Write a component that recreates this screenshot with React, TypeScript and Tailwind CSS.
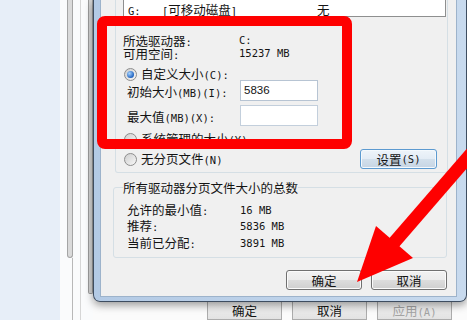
import React from 'react';

// ASCII parts of the labels: the original uses half-width SimSun glyphs
function A({ children }: { children: React.ReactNode }) {
  return <span className="font-['DejaVu_Sans_Mono',monospace] text-[10.5px]">{children}</span>;
}

function Radio({ checked }: { checked?: boolean }) {
  return (
    <span className="w-[13px] h-[13px] shrink-0 rounded-full border border-[#8d8d8d] bg-[linear-gradient(135deg,#cfcfcf,#f7f7f7)] flex items-center justify-center">
      {checked && (
        <span className="w-[7px] h-[7px] rounded-full bg-[radial-gradient(circle_at_35%_35%,#a8d4ff,#2063c0_70%)]" />
      )}
    </span>
  );
}

function WinButton({ children, focused }: { children: React.ReactNode; focused?: boolean }) {
  return (
    <div
      className={
        focused
          ? 'w-[77px] h-[20px] rounded-[3px] border border-[#5c9ad0] bg-[linear-gradient(#eef4fa,#e3ecf5_50%,#d3e0ec_50%,#c6d5e4)] shadow-[inset_0_0_0_1px_#f4f9fd] flex items-center justify-center'
          : 'w-[76px] h-[20px] rounded-[3px] border border-[#707070] bg-[linear-gradient(#f2f2f2,#ebebeb_50%,#dddddd_50%,#cfcfcf)] shadow-[inset_0_0_0_1px_#fbfbfb] flex items-center justify-center'
      }
    >
      {children}
    </div>
  );
}

function BackFrame() {
  return (
    <div className="w-[33px] shrink-0 flex bg-[#fafbfc]">
      <div className="w-[7px]" />
      <div className="w-[6px] flex flex-col">
        <div className="h-[258px] rounded-b-[3px] border-x border-b border-[#a5a5a5] bg-[#dadada]" />
        <div className="flex-1 ml-[5px] w-px bg-[#b8b8b8]" />
      </div>
      <div className="w-[15px] flex">
        <div className="ml-[7px] w-px bg-[#d6d6d6]" />
      </div>
      <div className="w-[5px] flex flex-col">
        <div className="h-[294px] rounded-b-[2px] border-x border-b border-[#9c9c9c] bg-[#d4d4d4]" />
      </div>
    </div>
  );
}

function BackButtons() {
  const cell = 'w-[75px] border-x border-b border-[#acacac] bg-[linear-gradient(#f4f4f4,#e2e2e2)] pt-[2px] text-center';
  return (
    <div className="flex-1 flex pl-[114px] gap-[10px] bg-[#fbfbfb]">
      <div className={cell}>确定</div>
      <div className={cell}>取消</div>
      <div className={cell + ' text-[#a3a3a3]'}>
        应用<A>(A)</A>
      </div>
    </div>
  );
}

function Dialog() {
  return (
    <div className="relative z-10 h-[306px] flex flex-col border-x border-b border-[#3e4d60] rounded-b-[7px] bg-[linear-gradient(90deg,#b3cae5,#c8daee)] pl-[7px] pr-[10px] pb-[5px] shadow-[0_3px_8px_rgba(0,0,0,0.4)]">
      <div className="flex-1 flex flex-col bg-[#f0f0f0] shadow-[0_0_0_1px_#9db3cb]">
        {/* 每个驱动器的分页文件大小 */}
        <div className="ml-[14px] w-[333px] h-[173px] flex flex-col border-x border-b border-[#d5dfe5] rounded-b-[3px]">
          <div className="ml-[7px] w-[323px] h-[17px] bg-white border-x border-b border-[#8e8f8f] flex pt-[3px] leading-[13px]">
            <span className="ml-[4px] w-[34px]">
              <A>G:</A>
            </span>
            <span className="w-[155px]">
              <A>[</A>可移动磁盘<A>]</A>
            </span>
            <span>无</span>
          </div>

          <div className="mt-[17px] h-[13px] flex pl-[7px]">
            <span className="w-[116px]">
              所选驱动器<A>:</A>
            </span>
            <A>C:</A>
          </div>
          <div className="h-[13px] flex pl-[7px]">
            <span className="w-[116px]">
              可用空间<A>:</A>
            </span>
            <A>15237 MB</A>
          </div>

          <div className="mt-[8px] h-[12px] flex items-center pl-[8px] gap-[4px]">
            <Radio checked />
            <span>
              自定义大小<A>(C):</A>
            </span>
          </div>
          <div className="h-[21px] flex items-center pl-[11px]">
            <span className="w-[113px] pt-[3px]">
              初始大小<A>(MB)(I):</A>
            </span>
            <div className="w-[78px] h-[21px] bg-white border border-[#b7c4d3] pl-[3px] flex items-center font-['Liberation_Sans',sans-serif] text-[11.5px]">
              5836
            </div>
          </div>
          <div className="mt-[4px] h-[21px] flex items-center pl-[11px]">
            <span className="w-[113px] pt-[3px]">
              最大值<A>(MB)(X):</A>
            </span>
            <div className="w-[78px] h-[21px] bg-white border border-[#c3cfdc]" />
          </div>

          <div className="mt-[7px] h-[13px] flex items-center pl-[8px] gap-[4px]">
            <Radio />
            <span>
              系统管理的大小<A>(Y)</A>
            </span>
          </div>
          <div className="mt-[3px] h-[20px] flex items-center pl-[8px] gap-[4px]">
            <Radio />
            <span>
              无分页文件<A>(N)</A>
            </span>
            <div className="ml-auto mr-[10px]">
              <WinButton focused>
                设置<A>(S)</A>
              </WinButton>
            </div>
          </div>
        </div>

        {/* 所有驱动器分页文件大小的总数 */}
        <fieldset className="mt-[8px] ml-[12px] w-[334px] h-[77px] border border-[#d5dfe5] rounded-[3px] px-[9px]">
          <legend className="leading-[13px]">所有驱动器分页文件大小的总数</legend>
          <div className="mt-[8px] pl-[4px]">
            <div className="h-[16.5px] flex items-center">
              <span className="w-[113px]">
                允许的最小值<A>:</A>
              </span>
              <A>16 MB</A>
            </div>
            <div className="h-[16.5px] flex items-center">
              <span className="w-[113px]">
                推荐<A>:</A>
              </span>
              <A>5836 MB</A>
            </div>
            <div className="h-[16.5px] flex items-center">
              <span className="w-[113px]">
                当前已分配<A>:</A>
              </span>
              <A>3891 MB</A>
            </div>
          </div>
        </fieldset>

        <div className="mt-[12px] flex justify-end gap-[9px] pr-[9px]">
          <WinButton>确定</WinButton>
          <WinButton>取消</WinButton>
        </div>
      </div>
    </div>
  );
}

export default function App() {
  return (
    <div className="relative w-[467px] h-[320px] overflow-hidden flex bg-white text-[#141414] font-['Noto_Sans_CJK_SC',sans-serif] text-[12.5px] leading-[13px]">
      <div className="w-[60px] shrink-0 bg-[#e7eef8]" />
      <BackFrame />
      <div className="w-[374px] shrink-0 flex flex-col">
        <Dialog />
        <BackButtons />
      </div>

      {/* red annotation: box and arrow drawn over the screenshot */}
      <div className="absolute z-20 left-[97px] top-[16px] w-[255px] h-[133px] border-[10px] border-[#fe0000] rounded-[8px]" />
      <svg className="absolute z-20 inset-0 pointer-events-none" width="467" height="320" viewBox="0 0 467 320">
        <line x1="482" y1="141" x2="392" y2="245" stroke="#fe0000" strokeWidth="13" />
        <polygon points="376,226 413,258 357,282" fill="#fe0000" />
      </svg>
    </div>
  );
}
